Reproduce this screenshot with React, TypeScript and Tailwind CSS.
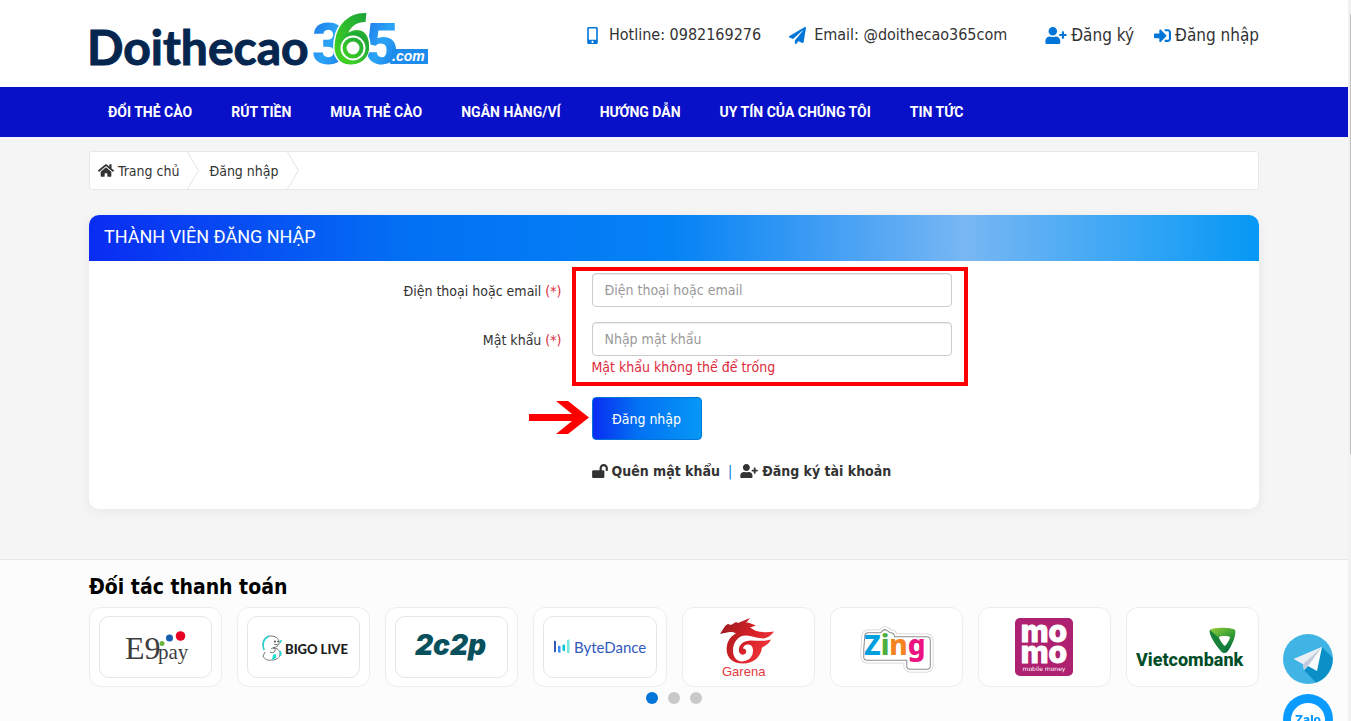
import type { ReactNode } from "react";
import { FaHome, FaLockOpen, FaMobileAlt, FaPaperPlane, FaSignInAlt, FaUserPlus } from "react-icons/fa";

const menu = ["Đổi thẻ cào", "Rút tiền", "Mua thẻ cào", "Ngân hàng/ví", "Hướng dẫn", "Uy tín của chúng tôi", "Tin tức"];

function Container({ children, className = "" }: { children: ReactNode; className?: string }) {
  return <div className={`mx-auto w-full max-w-[1200px] px-[15px] ${className}`}>{children}</div>;
}

function Logo() {
  return (
    <svg width="342" height="87" viewBox="0 -12 342 87" role="img" aria-label="Doithecao365.com">
      <defs>
        <linearGradient id="blue" x1="0" y1="0" x2="1" y2="1">
          <stop offset="0" stopColor="#1a6fe8" />
          <stop offset="0.5" stopColor="#2ba4f5" />
          <stop offset="1" stopColor="#1672e6" />
        </linearGradient>
        <linearGradient id="green" x1="0" y1="1" x2="1" y2="0">
          <stop offset="0" stopColor="#4ade1e" />
          <stop offset="1" stopColor="#149a3c" />
        </linearGradient>
      </defs>
      <text x="-2" y="53" fontFamily="Lato, sans-serif" fontWeight="700" fontSize="48" fill="#04264f" stroke="#04264f" strokeWidth="1">
        Doithecao
      </text>
      <g fontFamily="Roboto, sans-serif" fontWeight="900">
        <text x="223" y="52" fontSize="58" fill="url(#blue)">3</text>
        <text x="276" y="52" fontSize="58" fill="url(#blue)">5</text>
        <text x="243" y="52" fontSize="70" fontStyle="italic" fill="url(#green)" stroke="#fff" strokeWidth="3" paintOrder="stroke">6</text>
      </g>
      {/* rings over the bowl of the six */}
      <circle cx="264" cy="36" r="16" fill="url(#green)" />
      <circle cx="264" cy="36" r="11.500" fill="none" stroke="#fff" strokeWidth="2" />
      <circle cx="264" cy="36" r="6.500" fill="#fff" />
      <path d="M304 37h35v15h-38z" fill="#1c8bea" />
      <text x="303" y="49" fontFamily="'Liberation Sans', sans-serif" fontSize="14" fontWeight="700" fontStyle="italic" fill="#fff">.com</text>
    </svg>
  );
}

function Header() {
  return (
    <header className="bg-white">
      <Container className="flex h-[87px] items-start justify-between">
        <a href="#">
          <Logo />
        </a>
        <div className="flex items-center pt-[22px] leading-[26px]">
          <a href="#" className="mr-7 flex items-center gap-2">
            <FaMobileAlt className="size-[17px] text-[#0275d8]" />
            Hotline: 0982169276
          </a>
          <a href="#" className="mr-[38px] flex items-center gap-2">
            <FaPaperPlane className="size-[17px] text-[#0275d8]" />
            Email: @doithecao365com
          </a>
          <a href="#" className="mr-5 flex items-center gap-1 text-[17px]">
            <FaUserPlus className="h-[17px] w-[22px] text-[#0275d8]" />
            Đăng ký
          </a>
          <a href="#" className="flex items-center gap-1 text-[17px]">
            <FaSignInAlt className="text-[#0275d8]" />
            Đăng nhập
          </a>
        </div>
      </Container>
      <nav className="bg-[#0810c8]">
        <Container>
          <div className="flex h-[50px] gap-[39px] pl-[19px]">
            {menu.map((item) => (
              <a key={item} href="#" className="flex items-center font-[Roboto,sans-serif] text-sm font-bold text-white uppercase">
                {item}
              </a>
            ))}
          </div>
        </Container>
      </nav>
    </header>
  );
}

function CrumbArrow() {
  return (
    <svg width="12" height="37" viewBox="0 0 12 37" fill="none" stroke="#e3e3e3" className="shrink-0">
      <path d="M0.5 0L11.5 18.500L0.5 37" />
    </svg>
  );
}

function Breadcrumb() {
  return (
    <nav className="mt-[14px] flex items-center rounded-[3px] border border-[#e8e8e8] bg-white text-sm">
      <a href="#" className="flex items-center gap-1 px-2">
        <FaHome className="h-[15px] w-4" />
        Trang chủ
      </a>
      <CrumbArrow />
      <a href="#" className="pr-2 pl-[10px]">
        Đăng nhập
      </a>
      <CrumbArrow />
    </nav>
  );
}

function Field({ id, label, type, placeholder, error }: { id: string; label: string; type: string; placeholder: string; error?: string }) {
  return (
    <div className="grid grid-cols-12">
      <label htmlFor={id} className="col-span-5 px-[15px] pt-2 text-right">
        {label} <span className="text-[#dc2b3c]">(*)</span>
      </label>
      <div className="col-span-4 px-[15px]">
        <input
          id={id}
          type={type}
          placeholder={placeholder}
          className="block h-[34px] w-full rounded-[4px] border border-[#ccc] px-3 shadow-[inset_0_1px_1px_rgba(0,0,0,0.075)] placeholder:text-[#999]"
        />
        {error && <p className="pt-[1px] text-[#dc2b3c]">{error}</p>}
      </div>
    </div>
  );
}

function LoginCard() {
  return (
    <section className="mt-[25px] overflow-hidden rounded-[10px] bg-white text-sm shadow-[0_2px_12px_rgba(0,0,0,0.06)]">
      <h1 className="h-[46px] bg-linear-[90deg,#0a2cf2_0%,#0370f3_27%,#0583f5_50%,#78b7f3_75%,#0598f5_100%] px-[15px] font-[Roboto,sans-serif] text-[18px] leading-[44px] text-white uppercase">
        Thành viên đăng nhập
      </h1>
      <form className="pb-7">
        <div className="relative flex flex-col gap-[15px] pt-3 pb-[9px]">
          <Field id="account" label="Điện thoại hoặc email" type="text" placeholder="Điện thoại hoặc email" />
          <Field id="password" label="Mật khẩu" type="password" placeholder="Nhập mật khẩu" error="Mật khẩu không thể để trống" />
          <div className="pointer-events-none absolute inset-x-0 top-[6px] bottom-0 grid grid-cols-12">
            <div className="col-span-4 col-start-6 -mr-px -ml-[5px] border-4 border-[#ff0000]" />
          </div>
        </div>
        <div className="mt-[11px] grid grid-cols-12">
          <div className="col-span-7 col-start-6 px-[15px]">
            <div className="relative w-fit">
              <button
                type="button"
                className="h-[43px] w-[110px] rounded-[4px] border border-[#0275d8] bg-linear-[90deg,#0a2cf2,#0370f3_40%,#0598f5] text-white"
              >
                Đăng nhập
              </button>
              <svg width="60" height="34" viewBox="0 0 60 34" fill="#ff0000" className="absolute top-1 right-full mr-[3px]">
                <path d="M0 13h43L27 0h12l21 16.500L39 33H27l16-13H0z" />
              </svg>
            </div>
            <div className="mt-[21px] flex items-center gap-2 font-bold">
              <a href="#" className="flex items-center gap-1">
                <FaLockOpen className="h-[14px] w-4" />
                Quên mật khẩu
              </a>
              <span className="font-normal text-[#0275d8]">|</span>
              <a href="#" className="flex items-center gap-1">
                <FaUserPlus className="h-[14px] w-[18px]" />
                Đăng ký tài khoản
              </a>
            </div>
          </div>
        </div>
      </form>
    </section>
  );
}

const zingOutline = "M38 28h14l3-3 4 3h2l1 4h35v26H80v-9H37V42z";

const logos: { name: string; framed?: boolean; art: ReactNode }[] = [
  {
    name: "E9pay",
    framed: true,
    art: (
      <g fontFamily="'Liberation Serif', serif" fill="#3d3d3d">
        <text x="26" y="43" fontSize="32">E9</text>
        <text x="59" y="43" fontSize="21">pay</text>
        <circle cx="63" cy="27.500" r="2.500" fill="#6cb33f" />
        <circle cx="70.500" cy="22" r="3.500" fill="#175eb0" />
        <circle cx="81.500" cy="20" r="4.800" fill="#e60023" />
      </g>
    ),
  },
  {
    name: "Bigo Live",
    framed: true,
    art: (
      <>
        <g fill="#fff" stroke="#555" strokeWidth="0.800" strokeLinejoin="round">
          <path d="M17 34c-3-9 1-14 7-14 6 0 9 4 8 8-1 2-3 3-6 4 4 0 7 2 7 6s-4 6-8 6c-4 1-8-1-9-4l2-4" />
          <path d="M24 33c2-2 5-1 4 2-1 2-4 2-5 1" fill="none" />
          <path d="M27 28c1 1 3 1 4 0" fill="none" />
        </g>
        <path d="M22 20c-6 3-7 8-5 14M33 27l1.500-3M33 35l1 3-1 2" fill="none" stroke="#25d5d0" strokeWidth="1.600" />
        <path d="M26 39l3-1v4l-4 2z" fill="#18dfd4" />
        <circle cx="28" cy="25.500" r="0.900" fill="#333" />
        <circle cx="31" cy="25.500" r="0.800" fill="#333" />
        <text x="38" y="38" fontFamily="Lato, sans-serif" fontWeight="900" fontSize="13" fill="#1c1c1c">BIGO LIVE</text>
      </>
    ),
  },
  {
    name: "2C2P",
    framed: true,
    art: (
      <text x="20" y="39" fontFamily="Inter, sans-serif" fontStyle="italic" fontWeight="900" fontSize="28" fill="#07505c">2c2p</text>
    ),
  },
  {
    name: "ByteDance",
    framed: true,
    art: (
      <>
        <path d="M11 24.500l2 .7v10.600l-2 .7z" fill="#325ab4" />
        <path d="M15 29.500l2.500.7v6.800l-2.500-.8z" fill="#3c8cff" />
        <path d="M19.500 29l2.500-.6v6.800l-2.500-.6z" fill="#00c8d2" />
        <path d="M24 24l2.500-.7v14.200l-2.500-.7z" fill="#78e6dc" />
        <text x="31" y="37" fontFamily="Lato, sans-serif" fontSize="15" fill="#3159bd">ByteDance</text>
      </>
    ),
  },
  {
    name: "Garena",
    art: (
      <>
        <defs>
          <linearGradient id="garena" x1="0" y1="0" x2="1" y2="0.500">
            <stop offset="0" stopColor="#941b1e" />
            <stop offset="0.600" stopColor="#d62027" />
            <stop offset="1" stopColor="#f0353a" />
          </linearGradient>
        </defs>
        <path
          d="M38 26c4-6 5-9 8-10l3 1 5-3 2 1 12-5-4 5 2-.5 8 3-6 2 5 3c6 2 12 2 19 1-3 4-6 6-10 7-8 0-12-3-18-3-9 0-13 8-13 15 0 6 3 10 8 11 7 0 12-4 12-11 0-4-2-6-5-6-3 0-5 2-5 4 2 0 4 2 3 4-1 3-6 3-7-1-1-6 4-11 12-11 7 0 13 1 20-1-2 4-5 6-9 8-1 9-8 16-19 16-12 0-18-8-16-18 1-6 5-10 9-12-5-3-9-1-16 .5z"
          fill="url(#garena)"
        />
        <text x="40" y="68" fontFamily="'Liberation Sans', sans-serif" fontSize="13" fill="#e0393e">Garena</text>
      </>
    ),
  },
  {
    name: "Zing",
    art: (
      <>
        <g fill="#fff" strokeLinejoin="round">
          <path d={zingOutline} stroke="#cfcfcf" strokeWidth="13" />
          <path d={zingOutline} stroke="#fff" strokeWidth="11.500" />
          <path d={zingOutline} stroke="#8d8d8d" strokeWidth="7.500" />
          <path d={zingOutline} stroke="#fff" strokeWidth="5.500" />
        </g>
        <text x="34" y="47" fontFamily="'Noto Sans', sans-serif" fontWeight="800" fontSize="28">
          <tspan fill="#00a0df">Z</tspan>
          <tspan fill="#4cae3e">i</tspan>
          <tspan fill="#f58220">n</tspan>
          <tspan fill="#ec1280">g</tspan>
        </text>
      </>
    ),
  },
  {
    name: "MoMo",
    art: (
      <>
        <rect x="37" y="10" width="58" height="58" rx="5" fill="#ae2070" />
        <g fill="#fff" stroke="#fff" strokeWidth="1" fontFamily="Inter, sans-serif" fontWeight="800" fontSize="30">
          <text x="66" y="34" textAnchor="middle">mo</text>
          <text x="66" y="55" textAnchor="middle">mo</text>
        </g>
        <text x="66" y="63" textAnchor="middle" fontFamily="'DejaVu Sans', sans-serif" fontSize="6" fill="#fff">
          mobile money
        </text>
      </>
    ),
  },
  {
    name: "Vietcombank",
    art: (
      <>
        <defs>
          <linearGradient id="vcb" x1="0" y1="0" x2="0.600" y2="1">
            <stop offset="0" stopColor="#9ccb3b" />
            <stop offset="0.500" stopColor="#3fa535" />
            <stop offset="1" stopColor="#00693c" />
          </linearGradient>
        </defs>
        <path d="M84 22c2-3 22-3 25 0 2 4-4 18-8 22-1 1-4 1-5 0-5-5-14-18-12-22z" fill="url(#vcb)" />
        <path d="M84 22l9 8 5 8 2 6.500c-2 .5-3 .5-4-.5-5-5-14-18-12-22z" fill="#17813c" />
        <path d="M93 29c1-1.500 10-1.500 11 0 0 2-3 7-5 9-2-1-6-7-6-9z" fill="#fff" />
        <text x="10" y="58" fontFamily="Roboto, sans-serif" fontWeight="800" fontSize="18" fill="#004d28">Vietcombank</text>
      </>
    ),
  },
];

function Partners() {
  return (
    <section className="mt-[50px] flex-1 border-t border-[#e7e7e7] bg-[#fcfcfc]">
      <Container>
        <h2 className="pt-3 pb-1 text-[21px] leading-[31px] font-bold text-black">Đối tác thanh toán</h2>
        <div className="grid grid-cols-8 gap-[15px]">
          {logos.map((logo) => (
            <a key={logo.name} href="#" className="relative flex h-20 items-center justify-center rounded-[12px] border border-[#ededed] bg-white">
              {logo.framed && <span className="absolute inset-x-[9px] inset-y-2 rounded-[10px] border border-[#e6e6e6]" />}
              <svg
                width={logo.framed ? "114" : "133"}
                height={logo.framed ? "62" : "78"}
                viewBox={logo.framed ? "0 0 114 62" : "0 0 133 78"}
                role="img"
                aria-label={logo.name}
                className="relative shrink-0"
              >
                {logo.art}
              </svg>
            </a>
          ))}
        </div>
        <div className="mt-[5px] flex justify-center gap-[10px]">
          <button type="button" aria-label="1" className="size-3 rounded-full bg-[#0275d8]" />
          <button type="button" aria-label="2" className="size-3 rounded-full bg-[#c9c9c9]" />
          <button type="button" aria-label="3" className="size-3 rounded-full bg-[#c9c9c9]" />
        </div>
      </Container>
    </section>
  );
}

function SupportLinks() {
  return (
    <div className="fixed right-[18px] -bottom-[23px] flex flex-col gap-[10px]">
      <a href="#" aria-label="Telegram">
        <svg width="50" height="50" viewBox="0 0 50 50">
          <circle cx="25" cy="25" r="25" fill="#41b4e6" />
          <path d="M39 13l10.500 10.500A25 25 0 0 1 33 48.700L21 36l3-6z" fill="#0a8fc7" />
          <path d="M11 25l28-12-5 24-9-5-4 4-1-6z" fill="#fff" />
          <path d="M11 25l28-12-19 17z" fill="#e9eef5" />
          <path d="M20 30l19-17-14 19-4 4z" fill="#c3cbdb" />
        </svg>
      </a>
      <a href="#" aria-label="Zalo">
        <svg width="50" height="50" viewBox="0 0 50 50">
          <circle cx="25" cy="25" r="25" fill="#0a9bff" />
          <circle cx="25" cy="26" r="17" fill="#fff" />
          <text x="25" y="30" textAnchor="middle" fontFamily="Inter, sans-serif" fontWeight="800" fontSize="12" fill="#0a9bff">Zalo</text>
        </svg>
      </a>
    </div>
  );
}

export default function App() {
  return (
    <div className="flex h-screen overflow-hidden bg-[#f5f5f5] font-['DejaVu_Sans_Condensed','DejaVu_Sans',sans-serif] text-[#333]">
      <div className="flex min-w-0 flex-1 flex-col">
        <Header />
        <main className="flex flex-1 flex-col">
          <Container>
            <Breadcrumb />
            <LoginCard />
          </Container>
          <Partners />
        </main>
      </div>
      <div className="w-[3px] bg-[#f1f1f1] pt-[14px] pl-[2px]">
        <div className="h-[440px] bg-[#c1c1c1]" />
      </div>
      <SupportLinks />
    </div>
  );
}
